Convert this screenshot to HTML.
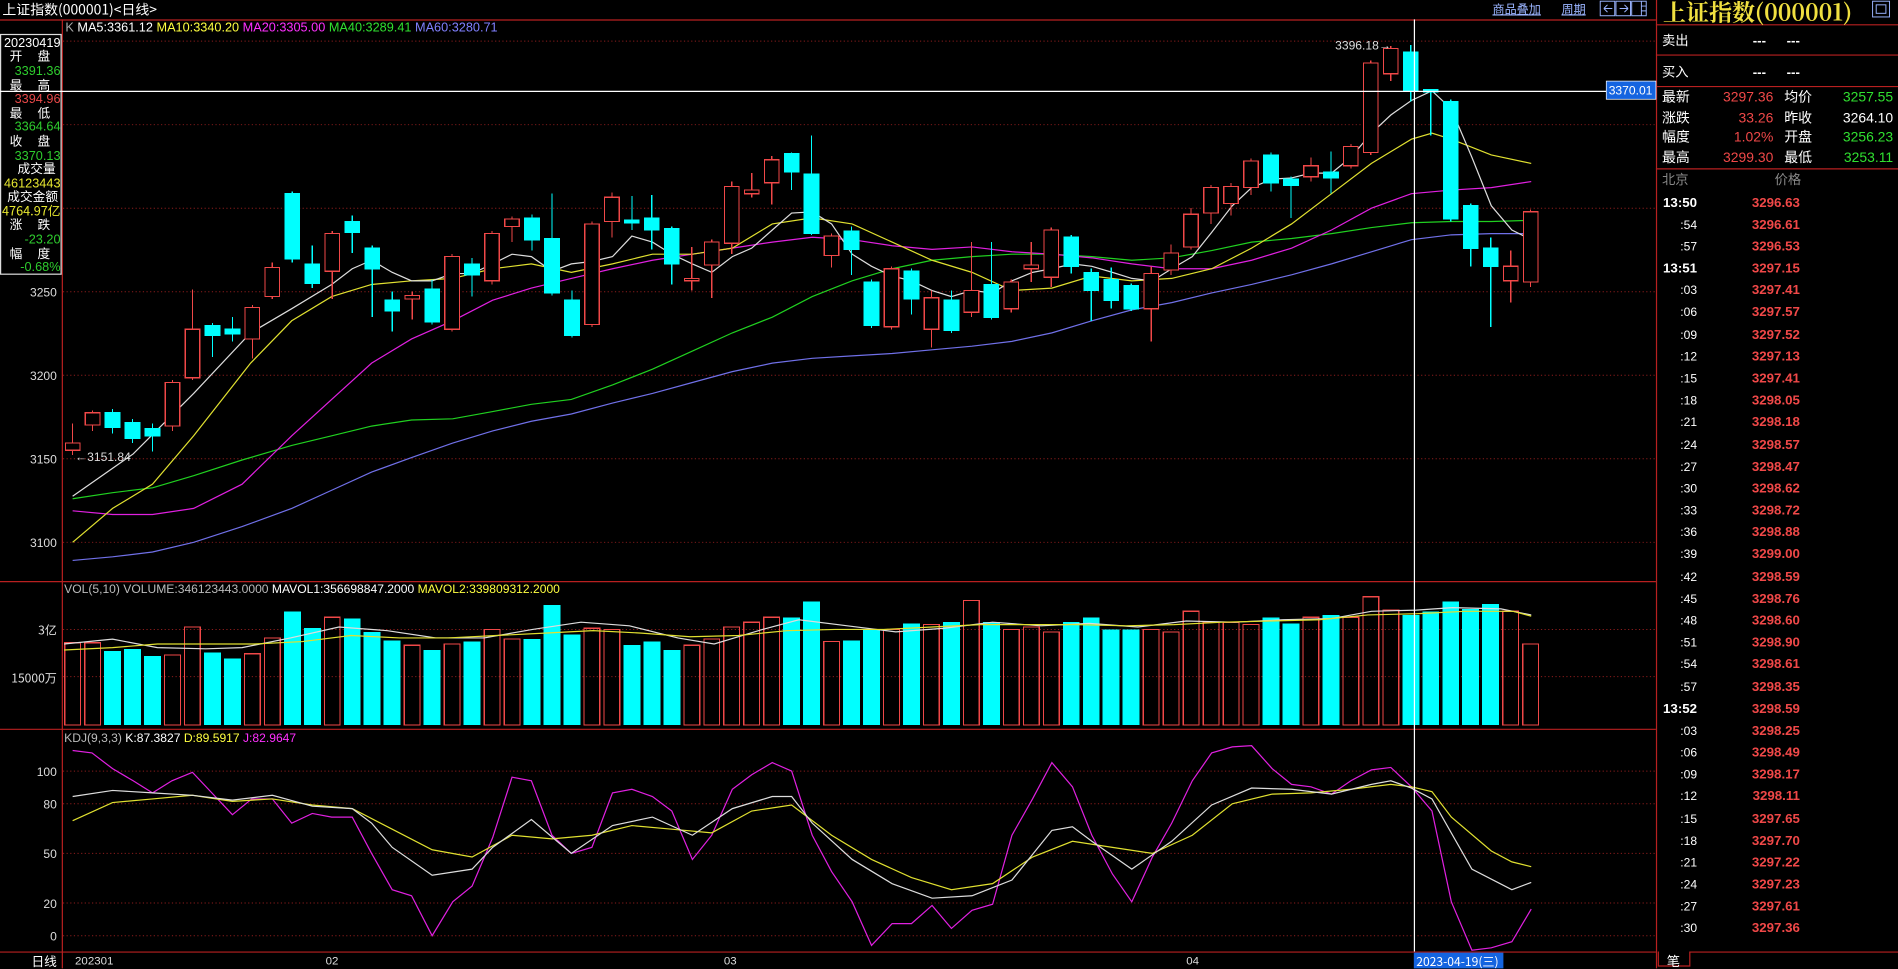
<!DOCTYPE html>
<html><head><meta charset="utf-8"><style>
html,body{margin:0;padding:0;background:#000;width:1898px;height:969px;overflow:hidden}
svg{display:block;font-size:10.5px}
text{font-family:"Liberation Sans","Noto Sans CJK SC",sans-serif}
.cn{font-family:"Noto Sans CJK SC","WenQuanYi Zen Hei",sans-serif}
</style></head><body>
<svg width="1898" height="969" viewBox="0 0 1568 800.5" preserveAspectRatio="none" xmlns="http://www.w3.org/2000/svg">
<rect width="1568" height="801" fill="#000"/>
<text x="2" y="12" fill="#fff" font-size="11.5" class="cn">上证指数(000001)&lt;日线&gt;</text>
<text x="1233" y="11" fill="#9ab4ff" font-size="10" class="cn" text-decoration="underline">商品叠加</text>
<text x="1290" y="11" fill="#9ab4ff" font-size="10" class="cn" text-decoration="underline">周期</text>
<g fill="none" stroke="#9ab4ff" stroke-width="0.8">
<rect x="1322" y="1" width="12" height="12"/><rect x="1335" y="1" width="12" height="12"/><rect x="1348" y="1" width="12" height="12"/>
<path d="M1325 7h7M1325 7l3-3M1325 7l3 3M1345 7h-7M1345 7l-3-3M1345 7l-3 3M1356 1v12M1356 5h4M1356 9h4"/>
<rect x="1547" y="1" width="14" height="13"/><rect x="1550" y="4" width="8" height="7"/>
</g>
<g stroke="#b82020" stroke-width="1">
<line x1="0" y1="16.5" x2="1368" y2="16.5"/>
<line x1="51.5" y1="16" x2="51.5" y2="800"/>
<line x1="1368.5" y1="0" x2="1368.5" y2="800"/>
<line x1="0" y1="480.5" x2="1368" y2="480.5"/>
<line x1="0" y1="602.5" x2="1368" y2="602.5"/>
<line x1="0" y1="786.5" x2="1368" y2="786.5"/>
<line x1="1368" y1="20.5" x2="1568" y2="20.5"/>
<line x1="1368" y1="45.5" x2="1568" y2="45.5"/>
<line x1="1368" y1="71.5" x2="1568" y2="71.5"/>
<line x1="1368" y1="139.5" x2="1568" y2="139.5"/>
<line x1="1396" y1="786.5" x2="1568" y2="786.5"/>
</g>
<path d="M1370 786v12h26v-12" fill="none" stroke="#b82020"/>
<text x="1377" y="798" fill="#fff" font-size="11" class="cn">笔</text>
<g stroke="#8a1c1c" stroke-width="0.8" stroke-dasharray="1,2">
<line x1="52" y1="34" x2="1368" y2="34"/><line x1="52" y1="103" x2="1368" y2="103"/>
<line x1="52" y1="172" x2="1368" y2="172"/><line x1="52" y1="241" x2="1368" y2="241"/>
<line x1="52" y1="310" x2="1368" y2="310"/><line x1="52" y1="379" x2="1368" y2="379"/>
<line x1="52" y1="448" x2="1368" y2="448"/>
<line x1="52" y1="520" x2="1368" y2="520"/><line x1="52" y1="559" x2="1368" y2="559"/>
<line x1="52" y1="637" x2="1368" y2="637"/><line x1="52" y1="664" x2="1368" y2="664"/>
<line x1="52" y1="705" x2="1368" y2="705"/><line x1="52" y1="746" x2="1368" y2="746"/>
<line x1="52" y1="773" x2="1368" y2="773"/>
</g>
<g fill="#ddd" font-size="10" text-anchor="end">
<text x="47" y="245">3250</text><text x="47" y="314">3200</text><text x="47" y="383">3150</text><text x="47" y="452">3100</text>
<text x="47" y="524" class="cn">3亿</text><text x="47" y="564" class="cn">15000万</text>
<text x="47" y="641">100</text><text x="47" y="668">80</text><text x="47" y="709">50</text><text x="47" y="750">20</text><text x="47" y="777">0</text>
</g>
<text x="26" y="798" fill="#fff" font-size="10.5" class="cn">日线</text>
<g fill="#ddd" font-size="9.5"><text x="62" y="797">202301</text><text x="269" y="797">02</text><text x="598" y="797">03</text><text x="980" y="797">04</text></g>
<rect x="0.5" y="28.5" width="50" height="198" fill="#000" stroke="#ddd" stroke-width="1"/>
<g font-size="10.5" text-anchor="end">
<text x="50" y="39" fill="#fff">20230419</text>
<text x="50" y="62" fill="#2ecc2e">3391.36</text>
<text x="50" y="85" fill="#e84848">3394.96</text>
<text x="50" y="108" fill="#2ecc2e">3364.64</text>
<text x="50" y="132" fill="#2ecc2e">3370.13</text>
<text x="46" y="143" fill="#fff" class="cn">成交量</text>
<text x="50" y="155" fill="#e8e830">46123443</text>
<text x="48" y="166" fill="#fff" class="cn">成交金额</text>
<text x="50" y="178" fill="#e8e830" class="cn">4764.97亿</text>
<text x="50" y="201" fill="#2ecc2e">-23.20</text>
<text x="50" y="224" fill="#2ecc2e">-0.68%</text>
</g>
<g font-size="10.5" fill="#fff" class="cn">
<text x="8" y="50">开</text><text x="31" y="50">盘</text>
<text x="8" y="74">最</text><text x="31" y="74">高</text>
<text x="8" y="97">最</text><text x="31" y="97">低</text>
<text x="8" y="120">收</text><text x="31" y="120">盘</text>
<text x="8" y="189">涨</text><text x="31" y="189">跌</text>
<text x="8" y="213">幅</text><text x="31" y="213">度</text>
</g>
<text x="54" y="26" font-size="10.5"><tspan fill="#aaa">K  </tspan><tspan fill="#fff">MA5:3361.12 </tspan><tspan fill="#ffff40">MA10:3340.20 </tspan><tspan fill="#ff30ff">MA20:3305.00 </tspan><tspan fill="#30e030">MA40:3289.41 </tspan><tspan fill="#8080ff">MA60:3280.71</tspan></text>
<text x="53" y="490" font-size="10"><tspan fill="#bbb">VOL(5,10) VOLUME:346123443.0000 </tspan><tspan fill="#fff">MAVOL1:356698847.2000 </tspan><tspan fill="#ffff40">MAVOL2:339809312.2000</tspan></text>
<text x="53" y="613" font-size="10"><tspan fill="#bbb">KDJ(9,3,3) </tspan><tspan fill="#fff">K:87.3827 </tspan><tspan fill="#ffff40">D:89.5917 </tspan><tspan fill="#ff30ff">J:82.9647</tspan></text>
<g fill="none" stroke-width="1">
<polyline stroke="#7070e8" points="60,463 93,460 126,456 160,448 200,435 241,420 274,405 307,390 340,378 374,366 407,356 439,348 472,342 506,333 539,325 572,316 605,307 638,300 671,296 704,294 737,292 770,289 803,286 836,282 869,275 902,265 935,256 968,250 1001,242 1034,235 1067,227 1100,218 1133,208 1166,198 1199,194 1232,193 1265,193"/>
<polyline stroke="#20d020" points="60,412 93,407 126,403 160,393 200,380 241,368 274,360 307,352 340,347 374,346 407,340 439,334 472,330 506,318 539,305 572,290 605,275 638,262 671,245 704,232 737,222 770,215 803,212 836,210 869,210 902,212 935,215 968,213 1001,207 1034,200 1067,197 1100,193 1133,188 1166,184 1199,183 1232,183 1265,182"/>
<polyline stroke="#e020e0" points="60,422 93,425 126,425 160,420 200,400 241,360 274,330 307,300 340,280 374,265 407,248 439,238 472,230 506,222 539,215 572,210 605,205 638,200 671,196 704,198 737,203 770,206 803,204 836,208 869,210 902,213 935,218 968,222 1001,222 1034,215 1067,205 1100,190 1133,172 1166,160 1199,157 1232,155 1265,150"/>
<polyline stroke="#e0e030" points="60,448 93,420 126,400 160,360 207,300 241,265 274,245 307,235 340,232 374,230 407,222 439,218 472,225 506,218 539,210 572,210 605,205 638,185 671,180 704,185 737,200 770,215 803,225 836,240 869,238 902,228 935,232 968,230 1001,222 1034,205 1067,185 1100,160 1133,135 1166,115 1183,110 1199,115 1232,128 1265,135"/>
<polyline stroke="#ddd" points="60,410 110,375 160,325 207,275 241,255 274,235 291,222 307,215 324,225 340,232 357,232 374,226 390,226 407,218 423,210 439,212 456,224 472,218 489,216 506,212 522,195 539,200 555,210 572,218 588,225 605,212 621,205 638,190 654,176 671,175 687,185 704,210 720,220 737,228 753,232 770,240 786,245 803,240 820,242 836,232 853,225 869,222 886,218 902,220 919,225 935,230 952,232 968,222 985,212 1001,192 1018,170 1034,155 1051,148 1067,147 1083,143 1100,143 1116,130 1133,110 1149,95 1166,83 1183,75 1199,90 1216,130 1232,170 1249,190 1265,198"/>
</g>
<g stroke-width="1" shape-rendering="crispEdges">
<g stroke="#f04848" fill="none">
<line x1="60" y1="350" x2="60" y2="376"/><rect x="54" y="366" width="12" height="6" fill="#000"/>
<line x1="76.5" y1="339" x2="76.5" y2="356"/><rect x="70.5" y="341" width="12" height="10" fill="#000"/>
<line x1="142.5" y1="314" x2="142.5" y2="356"/><rect x="136.5" y="316" width="12" height="36" fill="#000"/>
<line x1="159" y1="239" x2="159" y2="314"/><rect x="153" y="272" width="12" height="40" fill="#000"/>
<line x1="208.5" y1="252" x2="208.5" y2="296"/><rect x="202.5" y="254" width="12" height="26" fill="#000"/>
<line x1="225" y1="217" x2="225" y2="247"/><rect x="219" y="221" width="12" height="24" fill="#000"/>
<line x1="274.5" y1="191" x2="274.5" y2="247"/><rect x="268.5" y="193" width="12" height="31" fill="#000"/>
<line x1="340.5" y1="241" x2="340.5" y2="264"/><rect x="334.5" y="244" width="12" height="3" fill="#000"/>
<line x1="373.5" y1="210" x2="373.5" y2="274"/><rect x="367.5" y="212" width="12" height="60" fill="#000"/>
<line x1="406.5" y1="191" x2="406.5" y2="235"/><rect x="400.5" y="193" width="12" height="39" fill="#000"/>
<line x1="423" y1="179" x2="423" y2="200"/><rect x="417" y="181" width="12" height="6" fill="#000"/>
<line x1="489" y1="183" x2="489" y2="270"/><rect x="483" y="185" width="12" height="83" fill="#000"/>
<line x1="505.5" y1="159" x2="505.5" y2="196"/><rect x="499.5" y="163" width="12" height="20" fill="#000"/>
<line x1="571.5" y1="204" x2="571.5" y2="240"/><rect x="565.5" y="230" width="12" height="2" fill="#000"/>
<line x1="588" y1="198" x2="588" y2="246"/><rect x="582" y="200" width="12" height="19" fill="#000"/>
<line x1="604.5" y1="150" x2="604.5" y2="210"/><rect x="598.5" y="154" width="12" height="47" fill="#000"/>
<line x1="621" y1="143" x2="621" y2="163"/><rect x="615" y="157" width="12" height="3" fill="#000"/>
<line x1="637.5" y1="129" x2="637.5" y2="169"/><rect x="631.5" y="132" width="12" height="19" fill="#000"/>
<line x1="687" y1="193" x2="687" y2="221"/><rect x="681" y="195" width="12" height="16" fill="#000"/>
<line x1="736.5" y1="220" x2="736.5" y2="272"/><rect x="730.5" y="222" width="12" height="48" fill="#000"/>
<line x1="769.5" y1="240" x2="769.5" y2="287"/><rect x="763.5" y="246" width="12" height="26" fill="#000"/>
<line x1="802.5" y1="200" x2="802.5" y2="262"/><rect x="796.5" y="240" width="12" height="18" fill="#000"/>
<line x1="835.5" y1="231" x2="835.5" y2="258"/><rect x="829.5" y="233" width="12" height="22" fill="#000"/>
<line x1="852" y1="200" x2="852" y2="233"/><rect x="846" y="219" width="12" height="3" fill="#000"/>
<line x1="868.5" y1="188" x2="868.5" y2="237"/><rect x="862.5" y="190" width="12" height="39" fill="#000"/>
<line x1="951" y1="220" x2="951" y2="282"/><rect x="945" y="226" width="12" height="29" fill="#000"/>
<line x1="967.5" y1="202" x2="967.5" y2="227"/><rect x="961.5" y="209" width="12" height="14" fill="#000"/>
<line x1="984" y1="172" x2="984" y2="206"/><rect x="978" y="177" width="12" height="27" fill="#000"/>
<line x1="1000.5" y1="153" x2="1000.5" y2="185"/><rect x="994.5" y="155" width="12" height="21" fill="#000"/>
<line x1="1017" y1="151" x2="1017" y2="178"/><rect x="1011" y="154" width="12" height="14" fill="#000"/>
<line x1="1033.5" y1="131" x2="1033.5" y2="161"/><rect x="1027.5" y="133" width="12" height="22" fill="#000"/>
<line x1="1083" y1="130" x2="1083" y2="150"/><rect x="1077" y="137" width="12" height="9" fill="#000"/>
<line x1="1116" y1="119" x2="1116" y2="139"/><rect x="1110" y="121" width="12" height="16" fill="#000"/>
<line x1="1132.5" y1="50" x2="1132.5" y2="128"/><rect x="1126.5" y="52" width="12" height="74" fill="#000"/>
<line x1="1149" y1="38" x2="1149" y2="67"/><rect x="1143" y="40" width="12" height="21" fill="#000"/>
<line x1="1248" y1="207" x2="1248" y2="250"/><rect x="1242" y="220" width="12" height="12" fill="#000"/>
<line x1="1264.5" y1="173" x2="1264.5" y2="237"/><rect x="1258.5" y="175" width="12" height="58" fill="#000"/>
</g>
<g stroke="#00ffff" fill="#00ffff">
<line x1="93" y1="338" x2="93" y2="358"/><rect x="87" y="341" width="12" height="12"/>
<line x1="109.5" y1="346" x2="109.5" y2="366"/><rect x="103.5" y="349" width="12" height="13"/>
<line x1="126" y1="350" x2="126" y2="373"/><rect x="120" y="354" width="12" height="6"/>
<line x1="175.5" y1="267" x2="175.5" y2="295"/><rect x="169.5" y="269" width="12" height="8"/>
<line x1="192" y1="262" x2="192" y2="282"/><rect x="186" y="272" width="12" height="4"/>
<line x1="241.5" y1="158" x2="241.5" y2="217"/><rect x="235.5" y="160" width="12" height="54"/>
<line x1="258" y1="203" x2="258" y2="238"/><rect x="252" y="218" width="12" height="16"/>
<line x1="291" y1="178" x2="291" y2="209"/><rect x="285" y="183" width="12" height="9"/>
<line x1="307.5" y1="203" x2="307.5" y2="262"/><rect x="301.5" y="205" width="12" height="17"/>
<line x1="324" y1="241" x2="324" y2="274"/><rect x="318" y="248" width="12" height="9"/>
<line x1="357" y1="231" x2="357" y2="268"/><rect x="351" y="239" width="12" height="27"/>
<line x1="390" y1="213" x2="390" y2="245"/><rect x="384" y="218" width="12" height="9"/>
<line x1="439.5" y1="177" x2="439.5" y2="207"/><rect x="433.5" y="180" width="12" height="18"/>
<line x1="456" y1="160" x2="456" y2="244"/><rect x="450" y="197" width="12" height="45"/>
<line x1="472.5" y1="240" x2="472.5" y2="279"/><rect x="466.5" y="248" width="12" height="29"/>
<line x1="522" y1="162" x2="522" y2="190"/><rect x="516" y="182" width="12" height="2"/>
<line x1="538.5" y1="161" x2="538.5" y2="206"/><rect x="532.5" y="180" width="12" height="10"/>
<line x1="555" y1="187" x2="555" y2="235"/><rect x="549" y="189" width="12" height="29"/>
<line x1="654" y1="126" x2="654" y2="157"/><rect x="648" y="127" width="12" height="15"/>
<line x1="670.5" y1="112" x2="670.5" y2="194"/><rect x="664.5" y="144" width="12" height="49"/>
<line x1="703.5" y1="187" x2="703.5" y2="227"/><rect x="697.5" y="191" width="12" height="15"/>
<line x1="720" y1="231" x2="720" y2="271"/><rect x="714" y="233" width="12" height="36"/>
<line x1="753" y1="222" x2="753" y2="260"/><rect x="747" y="224" width="12" height="23"/>
<line x1="786" y1="240" x2="786" y2="275"/><rect x="780" y="248" width="12" height="25"/>
<line x1="819" y1="200" x2="819" y2="264"/><rect x="813" y="235" width="12" height="27"/>
<line x1="885" y1="194" x2="885" y2="226"/><rect x="879" y="196" width="12" height="24"/>
<line x1="901.5" y1="222" x2="901.5" y2="265"/><rect x="895.5" y="225" width="12" height="15"/>
<line x1="918" y1="221" x2="918" y2="255"/><rect x="912" y="231" width="12" height="17"/>
<line x1="934.5" y1="234" x2="934.5" y2="257"/><rect x="928.5" y="236" width="12" height="19"/>
<line x1="1050" y1="126" x2="1050" y2="158"/><rect x="1044" y="128" width="12" height="23"/>
<line x1="1066.5" y1="146" x2="1066.5" y2="180"/><rect x="1060.5" y="148" width="12" height="5"/>
<line x1="1099.5" y1="125" x2="1099.5" y2="160"/><rect x="1093.5" y="142" width="12" height="5"/>
<line x1="1165.5" y1="37" x2="1165.5" y2="84"/><rect x="1159.5" y="43" width="12" height="32"/>
<line x1="1182" y1="74" x2="1182" y2="112"/><rect x="1176" y="74" width="12" height="2"/>
<line x1="1198.5" y1="82" x2="1198.5" y2="183"/><rect x="1192.5" y="84" width="12" height="97"/>
<line x1="1215" y1="168" x2="1215" y2="220"/><rect x="1209" y="170" width="12" height="35"/>
<line x1="1231.5" y1="196" x2="1231.5" y2="270"/><rect x="1225.5" y="205" width="12" height="15"/>
</g>
</g>
<text x="1103" y="41" fill="#ddd" font-size="10">3396.18→</text>
<text x="62" y="381" fill="#ddd" font-size="10">←3151.84</text>
<g stroke-width="1" shape-rendering="crispEdges">
<g stroke="#f04848" fill="none">
<rect x="53.5" y="531" width="13" height="68"/><rect x="70" y="531" width="13" height="68"/>
<rect x="136" y="541" width="13" height="58"/><rect x="152.5" y="518" width="13" height="81"/>
<rect x="202" y="540" width="13" height="59"/><rect x="218.5" y="527" width="13" height="72"/>
<rect x="268" y="510" width="13" height="89"/><rect x="334" y="533" width="13" height="66"/>
<rect x="367" y="532" width="13" height="67"/><rect x="400" y="520" width="13" height="79"/>
<rect x="416.5" y="528" width="13" height="71"/><rect x="482.5" y="519" width="13" height="80"/>
<rect x="499" y="520" width="13" height="79"/><rect x="565" y="533" width="13" height="66"/>
<rect x="581.5" y="528" width="13" height="71"/><rect x="598" y="518" width="13" height="81"/>
<rect x="614.5" y="514" width="13" height="85"/><rect x="631" y="510" width="13" height="89"/>
<rect x="680.5" y="530" width="13" height="69"/><rect x="730" y="520" width="13" height="79"/>
<rect x="763" y="516" width="13" height="83"/><rect x="796" y="496" width="13" height="103"/>
<rect x="829" y="520" width="13" height="79"/><rect x="845.5" y="518" width="13" height="81"/>
<rect x="862" y="522" width="13" height="77"/><rect x="944.5" y="520" width="13" height="79"/>
<rect x="961" y="522" width="13" height="77"/><rect x="977.5" y="505" width="13" height="94"/>
<rect x="994" y="514" width="13" height="85"/><rect x="1010.5" y="514" width="13" height="85"/>
<rect x="1027" y="516" width="13" height="83"/><rect x="1076.5" y="510" width="13" height="89"/>
<rect x="1109.5" y="510" width="13" height="89"/><rect x="1126" y="493" width="13" height="106"/>
<rect x="1142.5" y="504" width="13" height="95"/><rect x="1241.5" y="505" width="13" height="94"/>
<rect x="1258" y="532" width="13" height="67"/>
</g>
<g fill="#00ffff">
<rect x="86" y="538" width="14" height="61"/><rect x="102.5" y="536" width="14" height="63"/>
<rect x="119" y="542" width="14" height="57"/><rect x="168.5" y="539" width="14" height="60"/>
<rect x="185" y="544" width="14" height="55"/><rect x="234.5" y="505" width="14" height="94"/>
<rect x="251" y="519" width="14" height="80"/><rect x="284" y="511" width="14" height="88"/>
<rect x="300.5" y="522" width="14" height="77"/><rect x="317" y="529" width="14" height="70"/>
<rect x="350" y="537" width="14" height="62"/><rect x="383" y="530" width="14" height="69"/>
<rect x="432.5" y="528" width="14" height="71"/><rect x="449" y="500" width="14" height="99"/>
<rect x="465.5" y="524" width="14" height="75"/><rect x="515" y="533" width="14" height="66"/>
<rect x="531.5" y="530" width="14" height="69"/><rect x="548" y="537" width="14" height="62"/>
<rect x="647" y="510" width="14" height="89"/><rect x="663.5" y="497" width="14" height="102"/>
<rect x="696.5" y="529" width="14" height="70"/><rect x="713" y="520" width="14" height="79"/>
<rect x="746" y="515" width="14" height="84"/><rect x="779" y="514" width="14" height="85"/>
<rect x="812" y="514" width="14" height="85"/><rect x="878" y="514" width="14" height="85"/>
<rect x="894.5" y="510" width="14" height="89"/><rect x="911" y="520" width="14" height="79"/>
<rect x="927.5" y="520" width="14" height="79"/><rect x="1043" y="510" width="14" height="89"/>
<rect x="1059.5" y="515" width="14" height="84"/><rect x="1092.5" y="508" width="14" height="91"/>
<rect x="1158.5" y="508" width="14" height="91"/><rect x="1175" y="505" width="14" height="94"/>
<rect x="1191.5" y="497" width="14" height="102"/><rect x="1208" y="503" width="14" height="96"/>
<rect x="1224.5" y="499" width="14" height="100"/>
</g>
</g>
<g fill="none" stroke-width="1">
<polyline stroke="#ddd" points="53,532 93,528 130,535 170,536 200,535 240,527 280,518 320,521 360,527 400,527 440,520 480,514 520,517 560,527 590,532 630,520 660,512 700,517 740,522 780,519 820,514 860,517 900,515 940,518 980,513 1020,514 1060,512 1100,511 1133,505 1170,504 1200,502 1240,503 1265,508"/>
<polyline stroke="#e0e030" points="53,537 93,535 130,532 170,532 210,532 250,530 290,525 330,527 370,527 410,525 450,523 490,521 530,523 570,526 610,525 650,521 690,520 730,520 770,518 810,516 850,516 890,516 930,517 970,516 1010,514 1050,513 1090,512 1130,508 1170,507 1210,505 1250,505 1265,509"/>
</g>
<g fill="none" stroke-width="1">
<polyline stroke="#e020e0" points="60,620 76,622 93,635 110,645 126,655 142,645 159,638 175,655 192,673 208,660 225,660 241,680 258,672 274,675 291,675 307,705 324,735 340,740 357,773 374,745 390,732 407,692 423,642 439,645 456,690 472,705 489,700 506,655 522,652 539,658 555,670 572,710 588,690 605,652 621,640 638,630 654,637 671,690 687,720 704,745 720,781 737,763 753,763 770,748 786,767 803,752 820,747 836,690 853,660 869,630 886,650 902,690 919,722 935,745 952,708 968,680 985,645 1001,622 1018,617 1034,616 1051,635 1067,648 1083,650 1100,656 1116,645 1133,636 1149,634 1166,650 1183,670 1199,745 1216,785 1232,783 1249,778 1265,751"/>
<polyline stroke="#e0e030" points="60,678 93,663 126,660 159,657 192,662 225,660 258,665 291,668 324,685 357,702 390,708 423,690 456,693 489,690 522,682 555,685 588,688 621,670 654,665 687,690 720,710 753,725 786,735 820,730 853,708 886,695 919,700 952,705 985,690 1018,664 1051,656 1083,655 1116,652 1149,648 1166,650 1183,654 1199,675 1232,703 1249,712 1265,716"/>
<polyline stroke="#ddd" points="60,658 93,653 126,655 159,657 192,661 225,657 258,666 291,668 307,680 324,700 357,723 390,718 407,700 439,677 472,705 506,682 539,675 572,690 605,668 638,658 654,658 671,680 704,710 737,730 770,742 803,740 836,727 869,686 886,683 902,695 935,718 968,695 1001,665 1034,651 1067,652 1100,656 1133,648 1149,645 1166,651 1183,660 1216,718 1249,735 1265,729"/>
</g>
<line x1="0" y1="75.5" x2="1328" y2="75.5" stroke="#fff" stroke-width="1"/>
<line x1="1168.5" y1="16" x2="1168.5" y2="786" stroke="#fff" stroke-width="1"/>
<rect x="1327" y="67" width="41" height="15" fill="#1464e0" stroke="#fff" stroke-width="0.6"/>
<text x="1329" y="78" fill="#fff" font-size="10">3370.01</text>
<rect x="1168" y="787" width="74" height="13" fill="#1464e0"/>
<text x="1170" y="798" fill="#fff" font-size="10" class="cn">2023-04-19(三)</text>
<text x="1452" y="17" fill="#f0e040" font-size="19" font-weight="bold" text-anchor="middle" style="font-family:'Noto Serif CJK SC','Liberation Serif',serif">上证指数(000001)</text>
<g font-size="11" class="cn" fill="#fff">
<text x="1373" y="37">卖出</text><text x="1373" y="63">买入</text>
</g>
<g fill="#fff" font-size="11" font-weight="bold"><text x="1448" y="37">---</text><text x="1476" y="37">---</text><text x="1448" y="63">---</text><text x="1476" y="63">---</text></g>
<g font-size="11.5">
<text x="1373" y="84" fill="#fff" class="cn">最新</text><text x="1465" y="84" fill="#f04848" text-anchor="end">3297.36</text>
<text x="1474" y="84" fill="#fff" class="cn">均价</text><text x="1564" y="84" fill="#30e030" text-anchor="end">3257.55</text>
<text x="1373" y="101" fill="#fff" class="cn">涨跌</text><text x="1465" y="101" fill="#f04848" text-anchor="end">33.26</text>
<text x="1474" y="101" fill="#fff" class="cn">昨收</text><text x="1564" y="101" fill="#fff" text-anchor="end">3264.10</text>
<text x="1373" y="117" fill="#fff" class="cn">幅度</text><text x="1465" y="117" fill="#f04848" text-anchor="end">1.02%</text>
<text x="1474" y="117" fill="#fff" class="cn">开盘</text><text x="1564" y="117" fill="#30e030" text-anchor="end">3256.23</text>
<text x="1373" y="134" fill="#fff" class="cn">最高</text><text x="1465" y="134" fill="#f04848" text-anchor="end">3299.30</text>
<text x="1474" y="134" fill="#fff" class="cn">最低</text><text x="1564" y="134" fill="#30e030" text-anchor="end">3253.11</text>
</g>
<text x="1373" y="152" fill="#888" font-size="11" class="cn">北京</text>
<text x="1488" y="152" fill="#888" font-size="11" class="cn" text-anchor="end">价格</text>
<g font-size="11" font-weight="bold">
<g fill="#fff" text-anchor="end">
<text x="1402" y="171">13:50</text><text x="1402" y="189" font-weight="normal" font-size="10">:54</text><text x="1402" y="207" font-weight="normal" font-size="10">:57</text>
<text x="1402" y="225">13:51</text><text x="1402" y="243" font-weight="normal" font-size="10">:03</text><text x="1402" y="261" font-weight="normal" font-size="10">:06</text>
<text x="1402" y="280" font-weight="normal" font-size="10">:09</text><text x="1402" y="298" font-weight="normal" font-size="10">:12</text><text x="1402" y="316" font-weight="normal" font-size="10">:15</text>
<text x="1402" y="334" font-weight="normal" font-size="10">:18</text><text x="1402" y="352" font-weight="normal" font-size="10">:21</text><text x="1402" y="371" font-weight="normal" font-size="10">:24</text>
<text x="1402" y="389" font-weight="normal" font-size="10">:27</text><text x="1402" y="407" font-weight="normal" font-size="10">:30</text><text x="1402" y="425" font-weight="normal" font-size="10">:33</text>
<text x="1402" y="443" font-weight="normal" font-size="10">:36</text><text x="1402" y="461" font-weight="normal" font-size="10">:39</text><text x="1402" y="480" font-weight="normal" font-size="10">:42</text>
<text x="1402" y="498" font-weight="normal" font-size="10">:45</text><text x="1402" y="516" font-weight="normal" font-size="10">:48</text><text x="1402" y="534" font-weight="normal" font-size="10">:51</text>
<text x="1402" y="552" font-weight="normal" font-size="10">:54</text><text x="1402" y="571" font-weight="normal" font-size="10">:57</text><text x="1402" y="589">13:52</text>
<text x="1402" y="607" font-weight="normal" font-size="10">:03</text><text x="1402" y="625" font-weight="normal" font-size="10">:06</text><text x="1402" y="643" font-weight="normal" font-size="10">:09</text>
<text x="1402" y="661" font-weight="normal" font-size="10">:12</text><text x="1402" y="680" font-weight="normal" font-size="10">:15</text><text x="1402" y="698" font-weight="normal" font-size="10">:18</text>
<text x="1402" y="716" font-weight="normal" font-size="10">:21</text><text x="1402" y="734" font-weight="normal" font-size="10">:24</text><text x="1402" y="752" font-weight="normal" font-size="10">:27</text>
<text x="1402" y="770" font-weight="normal" font-size="10">:30</text>
</g>
<g fill="#f04848" text-anchor="end">
<text x="1487" y="171">3296.63</text><text x="1487" y="189">3296.61</text><text x="1487" y="207">3296.53</text>
<text x="1487" y="225">3297.15</text><text x="1487" y="243">3297.41</text><text x="1487" y="261">3297.57</text>
<text x="1487" y="280">3297.52</text><text x="1487" y="298">3297.13</text><text x="1487" y="316">3297.41</text>
<text x="1487" y="334">3298.05</text><text x="1487" y="352">3298.18</text><text x="1487" y="371">3298.57</text>
<text x="1487" y="389">3298.47</text><text x="1487" y="407">3298.62</text><text x="1487" y="425">3298.72</text>
<text x="1487" y="443">3298.88</text><text x="1487" y="461">3299.00</text><text x="1487" y="480">3298.59</text>
<text x="1487" y="498">3298.76</text><text x="1487" y="516">3298.60</text><text x="1487" y="534">3298.90</text>
<text x="1487" y="552">3298.61</text><text x="1487" y="571">3298.35</text><text x="1487" y="589">3298.59</text>
<text x="1487" y="607">3298.25</text><text x="1487" y="625">3298.49</text><text x="1487" y="643">3298.17</text>
<text x="1487" y="661">3298.11</text><text x="1487" y="680">3297.65</text><text x="1487" y="698">3297.70</text>
<text x="1487" y="716">3297.22</text><text x="1487" y="734">3297.23</text><text x="1487" y="752">3297.61</text>
<text x="1487" y="770">3297.36</text>
</g>
</g>
</svg>
</body></html>
